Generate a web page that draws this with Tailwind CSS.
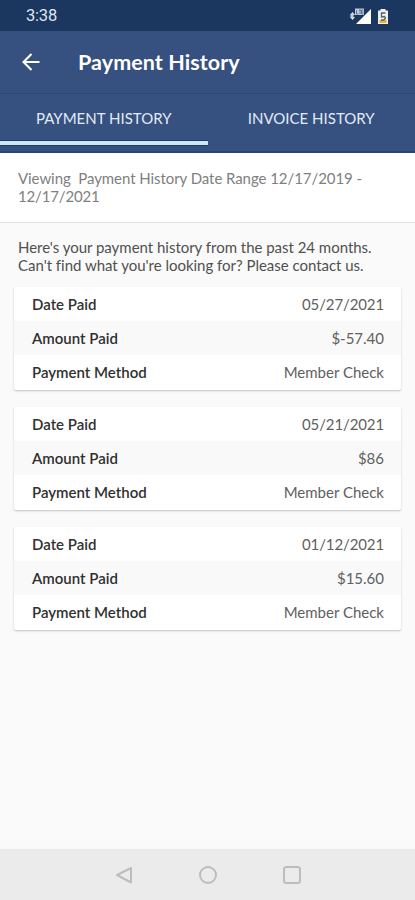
<!DOCTYPE html>
<html lang="en"><head><meta charset="utf-8"><title>Payment History</title>
<script src="https://cdn.jsdelivr.net/npm/@tailwindcss/browser@4"></script></head>
<body class="font-[Lato,sans-serif] bg-[#fafafa]">
<div class="w-[415px] h-[900px] flex flex-col overflow-hidden bg-[#fafafa]">
  <div class="h-[31px] shrink-0 bg-[#1b365f] flex items-center justify-between pl-[26px] pr-[25px] text-[#dfe5ee]">
    <span class="font-[Roboto,sans-serif] text-[16.5px] tracking-[-0.2px] pt-px">3:38</span>
    <svg width="41" height="18" viewBox="0 0 41 18">
      <path d="M1 8l2.500-3 2.500 3zM1 10l2.500 3 2.500-3z" fill="#dfe5ee"/>
      <path d="M1.500 7h3v4h-3z" fill="#c3ccd9"/>
      <path d="M22 2v15H7z" fill="#fff"/>
      <rect x="6" y="1.500" width="9" height="6.500" fill="#c3ccd9"/>
      <path d="M7.500 3v4h2M10 3h2M11 3v4M14.500 3h-2v4h2M12.500 5h2" stroke="#4d6080" stroke-width=".8" fill="none"/>
      <path d="M31.500 2h5v1.500H39V17H29V3.500h2.500z" fill="#eef0ec"/>
      <path d="M30.500 13h7v3h-7z" fill="#e8b62c"/>
      <path d="M36.500 6h-4v4l3-.5 1 1.500-1.500 2H32" stroke="#55606a" stroke-width="1.300" fill="none"/>
    </svg>
  </div>
  <header class="h-[62px] shrink-0 bg-[#36507f] flex items-center pl-[21px] text-white">
    <svg width="20" height="20" viewBox="0 0 20 20" fill="none" stroke="#fff" stroke-width="2.100"><path d="M18.500 10H2.500M10.500 2L2.500 10l8 8"/></svg>
    <h1 class="ml-[37px] text-[21.5px] leading-[26px] font-bold whitespace-nowrap tracking-[0.08px]">Payment History</h1>
  </header>
  <nav class="h-[60px] shrink-0 bg-[#36507f] border-t border-[#2d4774] border-b-2 border-b-[#294478] grid grid-cols-2 text-[15px] text-[#e1ebf6]">
    <div class="flex flex-col"><div class="h-[46px] flex items-center justify-center pt-[2px]"><span>PAYMENT HISTORY</span></div><div class="h-[6px] bg-[#cfe7f2] border-y border-[#173e6d]"></div></div>
    <div class="h-[46px] flex items-center justify-center pt-[2px]"><span>INVOICE HISTORY</span></div>
  </nav>
  <section class="h-[70px] shrink-0 bg-white border-b border-[#e2e2e2] pl-[18px] pt-[16px] text-[15px] leading-[18px] text-[#808080] tracking-[-0.065px] whitespace-pre"><p><span>Viewing  Payment History Date Range 12/17/2019 -</span></p><p class="tracking-[-0.15px]"><span>12/17/2021</span></p></section>
  <p class="h-[64px] shrink-0 pl-[18px] pt-[15px] text-[15px] leading-[18px] text-[#505050] tracking-[-0.02px] whitespace-nowrap"><span>Here's your payment history from the past 24 months.</span><br><span>Can't find what you're looking for? Please contact us.</span></p>
  <main class="px-[14px] flex flex-col gap-[17px] text-[15px] text-[#606060]">
    <dl class="h-[103px] bg-white rounded-[2px] shadow-[0_1px_2px_#0000003a]">
      <div class="h-[34px] pl-[18px] pr-[17px] flex items-center justify-between"><dt class="font-semibold text-[#303030]">Date Paid</dt><dd class="tracking-[-0.12px]">05/27/2021</dd></div>
      <div class="h-[34px] pl-[18px] pr-[17px] flex items-center justify-between bg-[#f9f9f9]"><dt class="font-semibold text-[#303030]">Amount Paid</dt><dd>$-57.40</dd></div>
      <div class="h-[35px] pl-[18px] pr-[17px] flex items-center justify-between"><dt class="font-semibold text-[#303030]">Payment Method</dt><dd>Member Check</dd></div>
    </dl>
    <dl class="h-[103px] bg-white rounded-[2px] shadow-[0_1px_2px_#0000003a]">
      <div class="h-[34px] pl-[18px] pr-[17px] flex items-center justify-between"><dt class="font-semibold text-[#303030]">Date Paid</dt><dd class="tracking-[-0.12px]">05/21/2021</dd></div>
      <div class="h-[34px] pl-[18px] pr-[17px] flex items-center justify-between bg-[#f9f9f9]"><dt class="font-semibold text-[#303030]">Amount Paid</dt><dd>$86</dd></div>
      <div class="h-[35px] pl-[18px] pr-[17px] flex items-center justify-between"><dt class="font-semibold text-[#303030]">Payment Method</dt><dd>Member Check</dd></div>
    </dl>
    <dl class="h-[103px] bg-white rounded-[2px] shadow-[0_1px_2px_#0000003a]">
      <div class="h-[34px] pl-[18px] pr-[17px] flex items-center justify-between"><dt class="font-semibold text-[#303030]">Date Paid</dt><dd class="tracking-[-0.12px]">01/12/2021</dd></div>
      <div class="h-[34px] pl-[18px] pr-[17px] flex items-center justify-between bg-[#f9f9f9]"><dt class="font-semibold text-[#303030]">Amount Paid</dt><dd>$15.60</dd></div>
      <div class="h-[35px] pl-[18px] pr-[17px] flex items-center justify-between"><dt class="font-semibold text-[#303030]">Payment Method</dt><dd>Member Check</dd></div>
    </dl>
  </main>
  <footer class="mt-auto h-[51px] shrink-0 bg-[#ebebeb] flex items-center justify-between pl-[115px] pr-[114px]">
    <svg width="18" height="18" viewBox="0 0 18 18" fill="none" stroke="#bdbdbd" stroke-width="2" stroke-linejoin="round"><path d="M2 9L16 2v14.500z"/></svg>
    <svg width="18" height="18" viewBox="0 0 18 18" fill="none" stroke="#bdbdbd" stroke-width="2"><circle cx="9" cy="9" r="8"/></svg>
    <svg width="18" height="18" viewBox="0 0 18 18" fill="none" stroke="#bdbdbd" stroke-width="2"><rect x="1" y="1" width="16" height="16" rx="2.500"/></svg>
  </footer>
</div></body></html>
